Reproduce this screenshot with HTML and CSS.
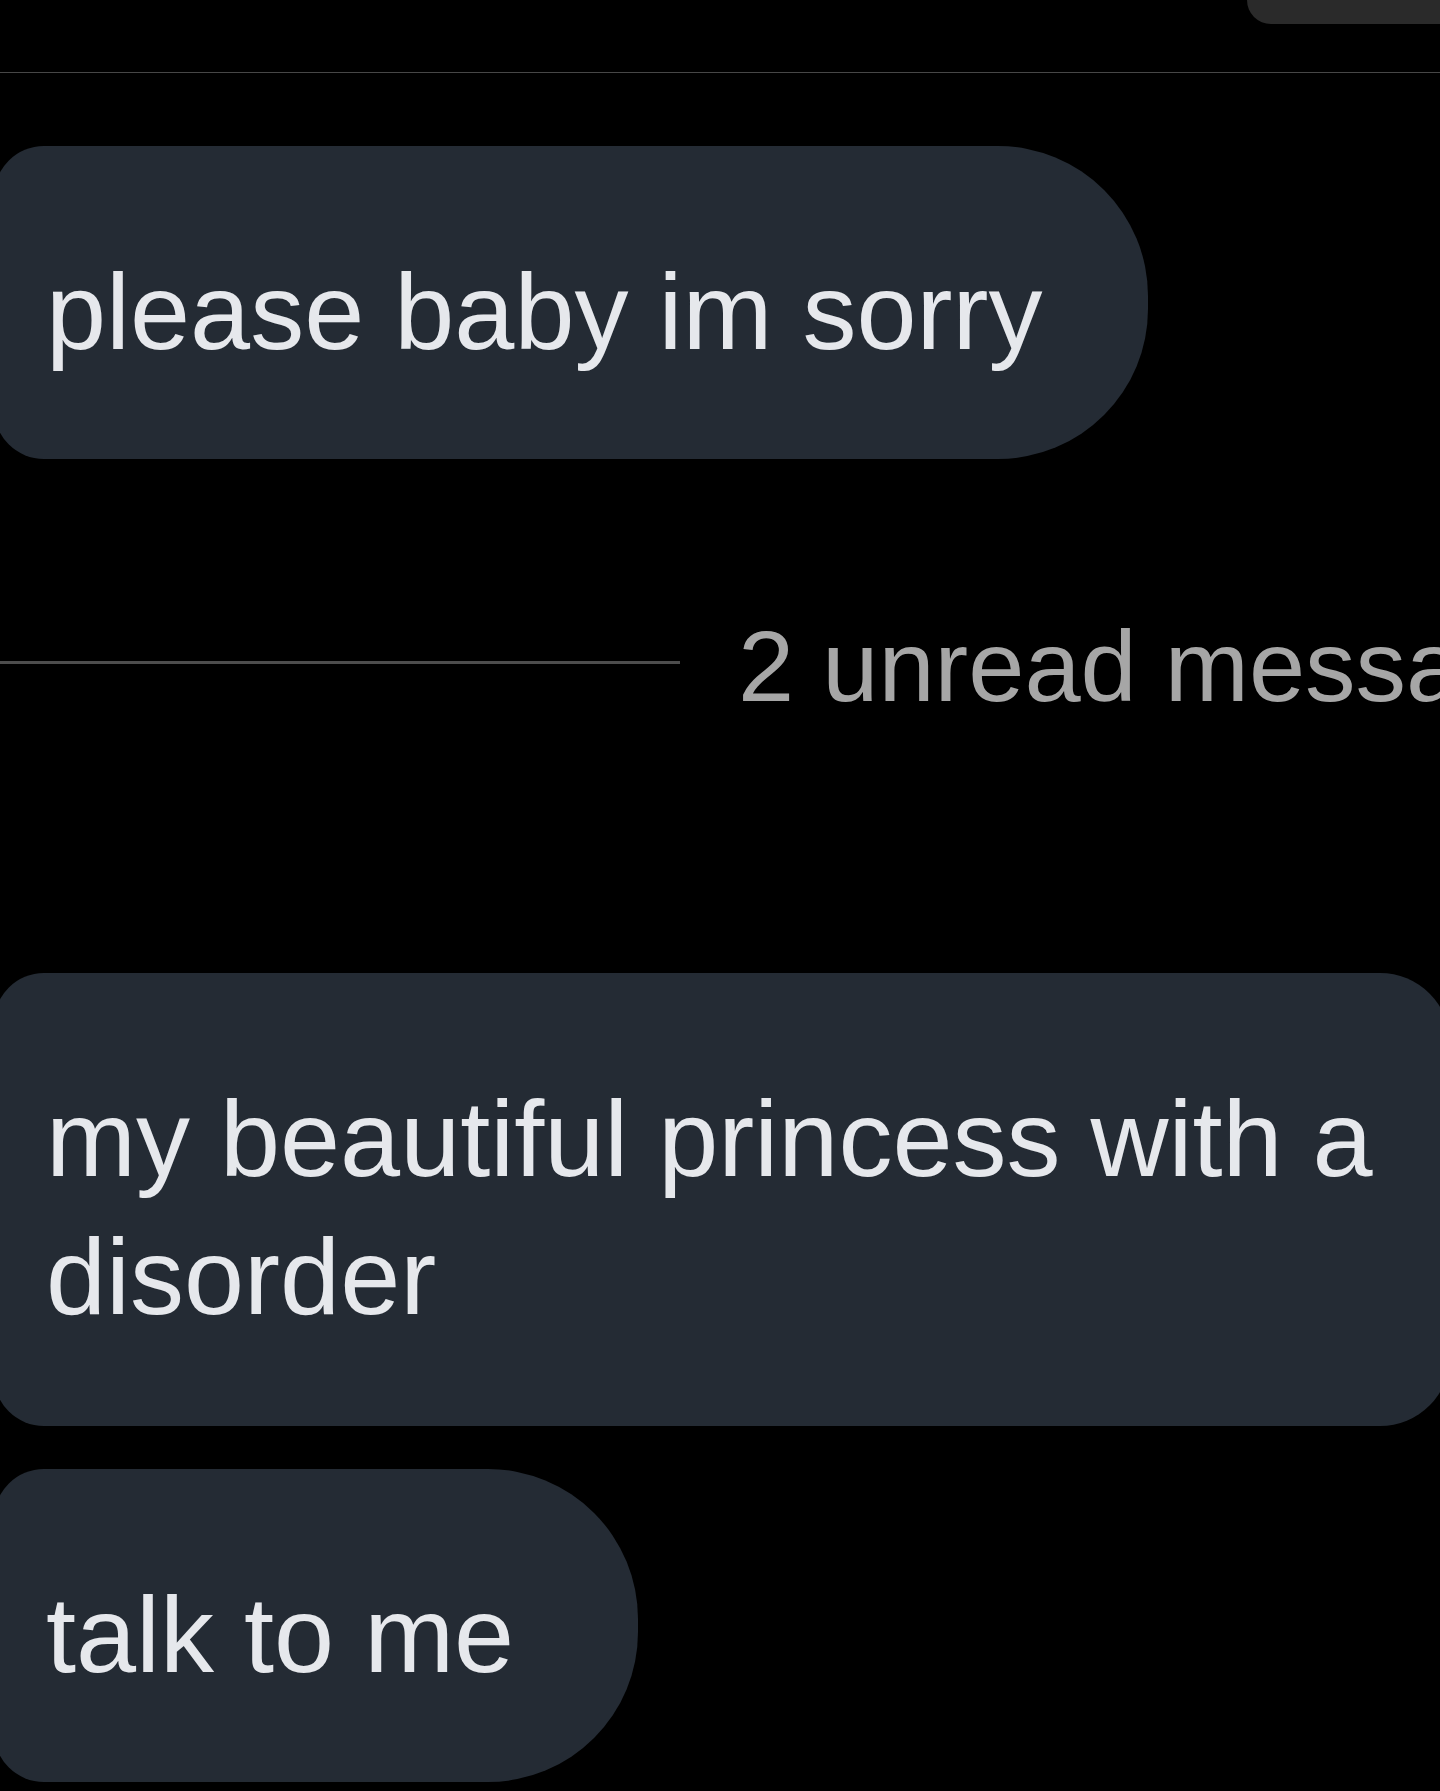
FILE: index.html
```html
<!DOCTYPE html>
<html lang="en">
<head>
<meta charset="utf-8">
<title>Messages</title>
<link rel="stylesheet" href="styles.css">
</head>
<body>
<div class="screen">
  <header class="topbar">
    <div class="tab"></div>
  </header>
  <main class="chat">
    <div class="bubble bubble-short">
      <span class="msg">please baby im sorry</span>
    </div>
    <div class="unread">
      <div class="unread-line"></div>
      <span class="unread-text">2 unread messages</span>
    </div>
    <div class="bubble bubble-wide">
      <span class="msg">my beautiful princess with a disorder</span>
    </div>
    <div class="bubble bubble-last">
      <span class="msg">talk to me</span>
    </div>
  </main>
</div>
</body>
</html>
```
FILE: styles.css
```css
html, body {
  margin: 0;
  padding: 0;
  background: #000;
}

.screen {
  width: 1440px;
  height: 1791px;
  overflow: hidden;
  background: #000;
  font-family: "Liberation Sans", Arial, sans-serif;
}

.topbar {
  height: 72px;
  border-bottom: 1px solid #474747;
  display: flex;
  justify-content: flex-end;
  align-items: flex-start;
}

.tab {
  width: 193px;
  height: 24px;
  background: #2a2a2a;
  border-bottom-left-radius: 26px;
}

.chat {
  display: flex;
  flex-direction: column;
  align-items: flex-start;
  padding-top: 73px;
}

.bubble {
  box-sizing: border-box;
  margin-left: -6px;
  padding: 97px 106px 78px 52px;
  background: #242b34;
  border-radius: 50px 150px 150px 50px;
  color: #e6e8ec;
  font-size: 108px;
  line-height: 138px;
  white-space: nowrap;
}

.bubble-short {
  padding-right: 106px;
}

.bubble-wide {
  align-self: stretch;
  margin-right: -10px;
  margin-top: 247px;
  padding-right: 60px;
  padding-bottom: 80px;
  white-space: normal;
  border-radius: 50px 70px 70px 50px;
}

.bubble-last {
  margin-top: 43px;
  padding-right: 124px;
}

.unread {
  align-self: stretch;
  display: flex;
  align-items: center;
  margin-top: 147px;
  height: 120px;
  white-space: nowrap;
}

.unread-line {
  flex: 0 0 680px;
  height: 3px;
  background: #4d4d4d;
  margin-bottom: 8px;
}

.unread-text {
  margin-left: 58px;
  font-size: 101px;
  line-height: 120px;
  color: #a6a6a6;
}
```
